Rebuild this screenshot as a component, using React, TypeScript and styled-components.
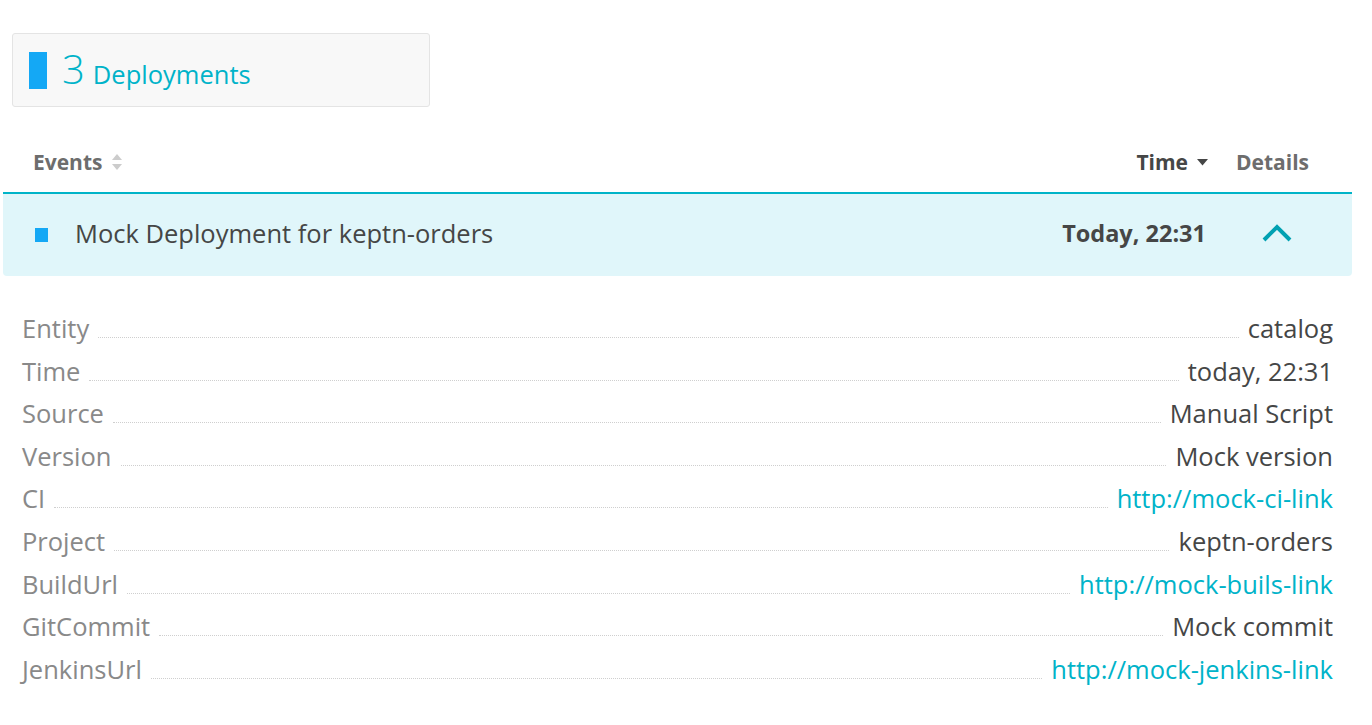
import * as React from 'react';
import styled, { createGlobalStyle } from 'styled-components';

const GlobalStyle = createGlobalStyle`
  body {
    margin: 0;
    background: #ffffff;
    font-family: "Open Sans", "Noto Sans", sans-serif;
    color: #454646;
  }
`;

const Page = styled.div`
  padding: 33px 20px 0 3px;
`;

const SummaryCard = styled.div`
  display: flex;
  align-items: center;
  gap: 15px;
  width: 418px;
  height: 74px;
  box-sizing: border-box;
  margin-left: 9px;
  padding-left: 16px;
  background: #f8f8f8;
  border: 1px solid #e4e4e4;
  border-radius: 3px;
`;

const BlueBar = styled.span`
  width: 18px;
  height: 37px;
  background: #14a8f5;
`;

const Count = styled.span`
  display: flex;
  align-items: baseline;
  gap: 8px;
  color: #00b3c9;
`;

const CountNumber = styled.span`
  font-size: 40px;
  font-weight: 300;
  line-height: 1;
`;

const CountLabel = styled.span`
  font-size: 25.5px;
`;

const HeaderRow = styled.div`
  display: flex;
  align-items: flex-end;
  height: 87px;
  padding: 0 43px 16px 30px;
  border-bottom: 2px solid #00b4c8;
  box-sizing: border-box;
`;

const HeaderCell = styled.div<{ $active?: boolean; $grow?: boolean }>`
  display: flex;
  align-items: center;
  gap: 9px;
  flex: ${(p) => (p.$grow ? 1 : 'none')};
  font-size: 21px;
  font-weight: 700;
  color: ${(p) => (p.$active ? '#454646' : '#6d6d6d')};
`;

const DetailsHead = styled(HeaderCell)`
  margin-left: 28px;
`;

const EventRow = styled.div`
  display: flex;
  align-items: center;
  height: 82px;
  box-sizing: border-box;
  padding: 0 60px 4px 32px;
  background: #e0f6fa;
  border-radius: 0 0 4px 4px;
`;

const Marker = styled.span`
  width: 13px;
  height: 14px;
  background: #14a8f5;
  margin: 4px 27px 0 0;
`;

const EventTitle = styled.div`
  flex: 1;
  font-size: 25.5px;
  color: #454646;
`;

const EventTime = styled.div`
  font-size: 23.5px;
  font-weight: 700;
  color: #454646;
  margin-right: 56px;
`;

const DetailsList = styled.dl`
  margin: 35px 19px 0 19px;
  display: flex;
  flex-direction: column;
`;

const DetailRow = styled.div`
  display: flex;
  align-items: baseline;
  height: 42.6px;
  font-size: 25.5px;
`;

const DetailLabel = styled.dt`
  color: #898989;
`;

const Leader = styled.span`
  flex: 1;
  margin: 0 9px;
  border-bottom: 1px dotted #cfcfcf;
`;

const DetailValue = styled.dd<{ $link?: boolean }>`
  margin: 0;
  color: ${(p) => (p.$link ? '#00b3c9' : '#454646')};
`;

const SortIcon = () => (
  <svg width="12" height="18" viewBox="0 0 12 18">
    <path d="M6 1 L11 7 L1 7 Z" fill="#cccccc" />
    <path d="M6 17 L11 11 L1 11 Z" fill="#cccccc" />
  </svg>
);

const DownIcon = () => (
  <svg width="11" height="8" viewBox="0 0 11 8">
    <path d="M0 1 L11 1 L5.5 7.5 Z" fill="#454646" />
  </svg>
);

const ChevronUp = () => (
  <svg width="30" height="18" viewBox="0 0 30 18">
    <path d="M2 16 L15 3 L28 16" stroke="#00a1b2" strokeWidth="4" fill="none" />
  </svg>
);

const details: { label: string; value: string; link?: boolean }[] = [
  { label: 'Entity', value: 'catalog' },
  { label: 'Time', value: 'today, 22:31' },
  { label: 'Source', value: 'Manual Script' },
  { label: 'Version', value: 'Mock version' },
  { label: 'CI', value: 'http://mock-ci-link', link: true },
  { label: 'Project', value: 'keptn-orders' },
  { label: 'BuildUrl', value: 'http://mock-buils-link', link: true },
  { label: 'GitCommit', value: 'Mock commit' },
  { label: 'JenkinsUrl', value: 'http://mock-jenkins-link', link: true },
];

export default function App() {
  return (
    <Page>
      <GlobalStyle />
      <SummaryCard>
        <BlueBar />
        <Count>
          <CountNumber>3</CountNumber>
          <CountLabel>Deployments</CountLabel>
        </Count>
      </SummaryCard>

      <HeaderRow>
        <HeaderCell $grow>
          Events <SortIcon />
        </HeaderCell>
        <HeaderCell $active>
          Time <DownIcon />
        </HeaderCell>
        <DetailsHead>Details</DetailsHead>
      </HeaderRow>

      <EventRow>
        <Marker />
        <EventTitle>Mock Deployment for keptn-orders</EventTitle>
        <EventTime>Today, 22:31</EventTime>
        <ChevronUp />
      </EventRow>

      <DetailsList>
        {details.map((d) => (
          <DetailRow key={d.label}>
            <DetailLabel>{d.label}</DetailLabel>
            <Leader />
            <DetailValue $link={d.link}>{d.value}</DetailValue>
          </DetailRow>
        ))}
      </DetailsList>
    </Page>
  );
}
